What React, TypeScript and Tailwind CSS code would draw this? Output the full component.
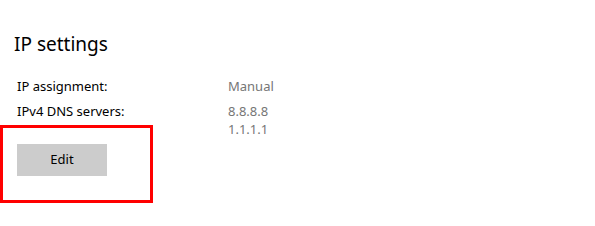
export default function App() {
  return (
    <div className="w-[595px] h-[226px] bg-white font-['Noto_Sans',sans-serif] text-black">
      <div className="pt-[30px] pl-[14px]">
        <h2 className="text-[19px] leading-[28px] font-normal">IP settings</h2>
      </div>

      <div className="mt-[15.5px] pl-[17px] flex flex-col text-[13px]">
        <div className="flex leading-[25px]">
          <span className="w-[211px]">IP assignment:</span>
          <span className="text-[#767676]">Manual</span>
        </div>
        <div className="mt-[3.5px] flex items-start leading-[18px]">
          <span className="w-[211px]">IPv4 DNS servers:</span>
          <div className="flex flex-col text-[#767676]">
            <span>8.8.8.8</span>
            <span>1.1.1.1</span>
          </div>
        </div>
      </div>

      <div className="-mt-[13px] w-[153px] h-[78px] border-[3px] border-[#ff0000] pt-[16px] pl-[14px]">
        <button
          type="button"
          className="w-[90px] h-[32px] bg-[#cccccc] text-[13px] text-black"
        >
          Edit
        </button>
      </div>
    </div>
  )
}
